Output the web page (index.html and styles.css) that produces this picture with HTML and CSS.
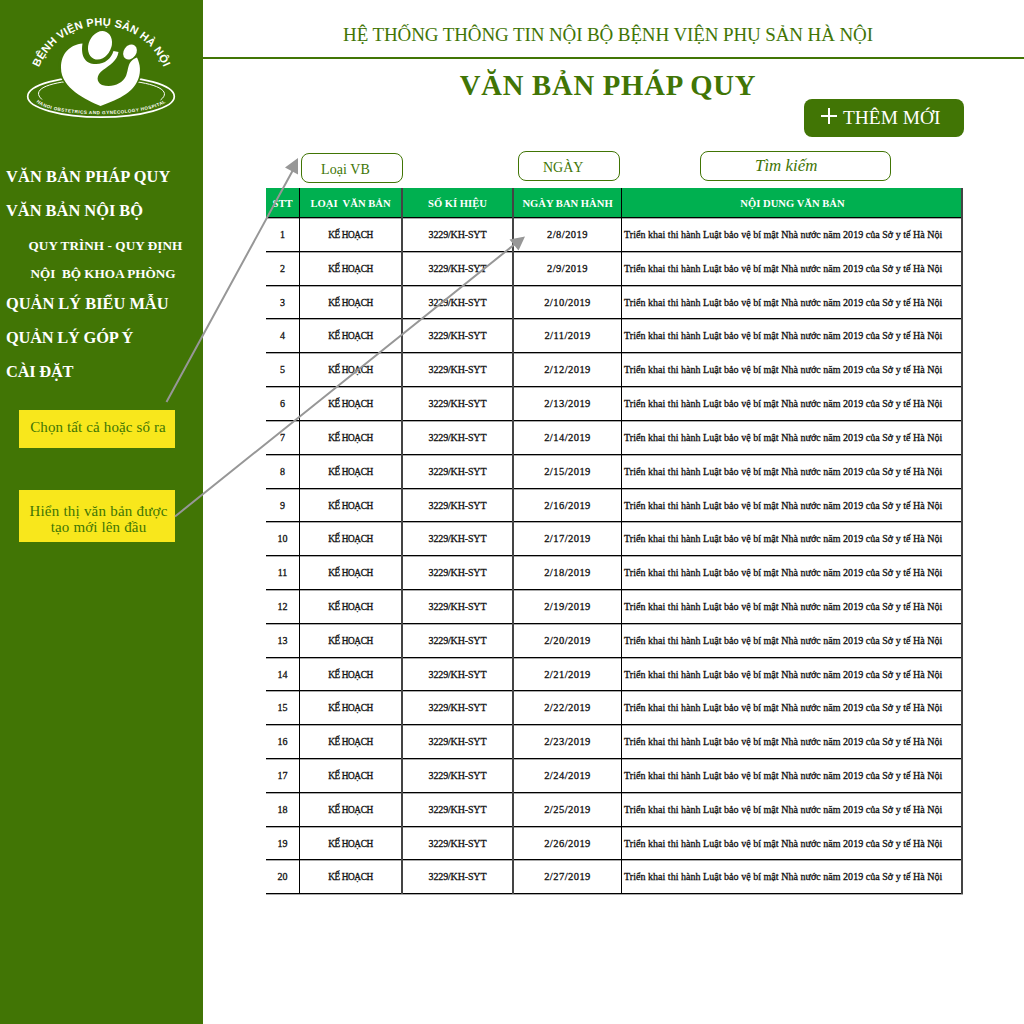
FILE: index.html
```html
<!DOCTYPE html>
<html lang="vi">
<head>
<meta charset="utf-8">
<title>Văn bản pháp quy</title>
<link rel="stylesheet" href="styles.css">
</head>
<body>
<div class="app">
  <aside class="sidebar">
    <svg class="logo" viewBox="0 0 203 130" aria-label="Bệnh viện Phụ sản Hà Nội">
      <defs>
        <path id="arcTop" d="M39 67.500A67.400 67.400 0 0 1 164.500 69.300"/>
        <path id="arcBottom" d="M36.500 102C52 118.500 150 118.500 168 100.500"/>
      </defs>
      <ellipse class="ring-outer" cx="101" cy="96.500" rx="73.300" ry="20.600"/>
      <path class="ring-inner" d="M42 99.500C28 87 58 79.500 101 79.500S176 88 160.500 100"/>
      <path class="heart-gap" d="M100.500 108C86 101 58 88 58.500 66C59 51 68 42 84 41H120C134 48 142 58 142 72C140 90 118 102 100.500 108Z"/>
      <path class="shape" d="M100.500 106C86 100 61 88 61 68C61 53 70 45 82.500 43.500C81 53 83 63 94 64C104 65 111 59 113.500 51L118.500 52C117 61 110 65 103 70C96 75 96 82 102 85C112 88 122 84 126 76C129 69 127 61 137 57.500C144 72 138 86 126 94C119 99 110 102 100.500 106Z"/>
      <ellipse class="shape" cx="100" cy="45.300" rx="11.300" ry="14.800" transform="rotate(25 100 45.300)"/>
      <ellipse class="shape" cx="130" cy="52" rx="6.300" ry="8" transform="rotate(35 130 52)"/>
      <text class="logo-name"><textPath href="#arcTop" textLength="159">BỆNH VIỆN PHỤ SẢN HÀ NỘI</textPath></text>
      <text class="logo-sub"><textPath href="#arcBottom" textLength="133">HANOI OBSTETRICS AND GYNECOLOGY HOSPITAL</textPath></text>
    </svg>
    <nav class="menu">
      <a class="item wide">VĂN BẢN PHÁP QUY</a>
      <a class="item">VĂN BẢN NỘI BỘ</a>
      <a class="subitem">QUY TRÌNH - QUY ĐỊNH</a>
      <a class="subitem second">NỘI&nbsp; BỘ KHOA PHÒNG</a>
      <a class="item">QUẢN LÝ BIỂU MẪU</a>
      <a class="item narrow">QUẢN LÝ GÓP Ý</a>
      <a class="item narrow">CÀI ĐẶT</a>
    </nav>
    <div class="note note-one">Chọn tất cả hoặc sổ ra</div>
    <div class="note note-two"><span>Hiển thị văn bản được</span><br>tạo mới lên đầu</div>
  </aside>
  <main class="main">
    <header class="topbar">HỆ THỐNG THÔNG TIN NỘI BỘ BỆNH VIỆN PHỤ SẢN HÀ NỘI</header>
    <h1 class="title">VĂN BẢN PHÁP QUY</h1>
    <div class="actions">
      <button class="add"><svg class="plus" viewBox="0 0 16 16"><path d="M8 0V16M0 8H16"/></svg>THÊM MỚI</button>
    </div>
    <div class="filters">
      <div class="field type">Loại VB</div>
      <div class="field date">NGÀY</div>
      <div class="field search">Tìm kiếm</div>
    </div>
    <section class="table">
      <div class="row head"><span>STT</span><span>LOẠI&nbsp; VĂN BẢN</span><span>SỐ KÍ HIỆU</span><span>NGÀY BAN HÀNH</span><span>NỘI DUNG VĂN BẢN</span></div>
      <div class="row"><span>1</span><span>KẾ HOẠCH</span><span>3229/KH-SYT</span><span>2/8/2019</span><span>Triển khai thi hành Luật bảo vệ bí mật Nhà nước năm 2019 của Sở y tế Hà Nội</span></div>
      <div class="row"><span>2</span><span>KẾ HOẠCH</span><span>3229/KH-SYT</span><span>2/9/2019</span><span>Triển khai thi hành Luật bảo vệ bí mật Nhà nước năm 2019 của Sở y tế Hà Nội</span></div>
      <div class="row"><span>3</span><span>KẾ HOẠCH</span><span>3229/KH-SYT</span><span>2/10/2019</span><span>Triển khai thi hành Luật bảo vệ bí mật Nhà nước năm 2019 của Sở y tế Hà Nội</span></div>
      <div class="row"><span>4</span><span>KẾ HOẠCH</span><span>3229/KH-SYT</span><span>2/11/2019</span><span>Triển khai thi hành Luật bảo vệ bí mật Nhà nước năm 2019 của Sở y tế Hà Nội</span></div>
      <div class="row"><span>5</span><span>KẾ HOẠCH</span><span>3229/KH-SYT</span><span>2/12/2019</span><span>Triển khai thi hành Luật bảo vệ bí mật Nhà nước năm 2019 của Sở y tế Hà Nội</span></div>
      <div class="row"><span>6</span><span>KẾ HOẠCH</span><span>3229/KH-SYT</span><span>2/13/2019</span><span>Triển khai thi hành Luật bảo vệ bí mật Nhà nước năm 2019 của Sở y tế Hà Nội</span></div>
      <div class="row"><span>7</span><span>KẾ HOẠCH</span><span>3229/KH-SYT</span><span>2/14/2019</span><span>Triển khai thi hành Luật bảo vệ bí mật Nhà nước năm 2019 của Sở y tế Hà Nội</span></div>
      <div class="row"><span>8</span><span>KẾ HOẠCH</span><span>3229/KH-SYT</span><span>2/15/2019</span><span>Triển khai thi hành Luật bảo vệ bí mật Nhà nước năm 2019 của Sở y tế Hà Nội</span></div>
      <div class="row"><span>9</span><span>KẾ HOẠCH</span><span>3229/KH-SYT</span><span>2/16/2019</span><span>Triển khai thi hành Luật bảo vệ bí mật Nhà nước năm 2019 của Sở y tế Hà Nội</span></div>
      <div class="row"><span>10</span><span>KẾ HOẠCH</span><span>3229/KH-SYT</span><span>2/17/2019</span><span>Triển khai thi hành Luật bảo vệ bí mật Nhà nước năm 2019 của Sở y tế Hà Nội</span></div>
      <div class="row"><span>11</span><span>KẾ HOẠCH</span><span>3229/KH-SYT</span><span>2/18/2019</span><span>Triển khai thi hành Luật bảo vệ bí mật Nhà nước năm 2019 của Sở y tế Hà Nội</span></div>
      <div class="row"><span>12</span><span>KẾ HOẠCH</span><span>3229/KH-SYT</span><span>2/19/2019</span><span>Triển khai thi hành Luật bảo vệ bí mật Nhà nước năm 2019 của Sở y tế Hà Nội</span></div>
      <div class="row"><span>13</span><span>KẾ HOẠCH</span><span>3229/KH-SYT</span><span>2/20/2019</span><span>Triển khai thi hành Luật bảo vệ bí mật Nhà nước năm 2019 của Sở y tế Hà Nội</span></div>
      <div class="row"><span>14</span><span>KẾ HOẠCH</span><span>3229/KH-SYT</span><span>2/21/2019</span><span>Triển khai thi hành Luật bảo vệ bí mật Nhà nước năm 2019 của Sở y tế Hà Nội</span></div>
      <div class="row"><span>15</span><span>KẾ HOẠCH</span><span>3229/KH-SYT</span><span>2/22/2019</span><span>Triển khai thi hành Luật bảo vệ bí mật Nhà nước năm 2019 của Sở y tế Hà Nội</span></div>
      <div class="row"><span>16</span><span>KẾ HOẠCH</span><span>3229/KH-SYT</span><span>2/23/2019</span><span>Triển khai thi hành Luật bảo vệ bí mật Nhà nước năm 2019 của Sở y tế Hà Nội</span></div>
      <div class="row"><span>17</span><span>KẾ HOẠCH</span><span>3229/KH-SYT</span><span>2/24/2019</span><span>Triển khai thi hành Luật bảo vệ bí mật Nhà nước năm 2019 của Sở y tế Hà Nội</span></div>
      <div class="row"><span>18</span><span>KẾ HOẠCH</span><span>3229/KH-SYT</span><span>2/25/2019</span><span>Triển khai thi hành Luật bảo vệ bí mật Nhà nước năm 2019 của Sở y tế Hà Nội</span></div>
      <div class="row"><span>19</span><span>KẾ HOẠCH</span><span>3229/KH-SYT</span><span>2/26/2019</span><span>Triển khai thi hành Luật bảo vệ bí mật Nhà nước năm 2019 của Sở y tế Hà Nội</span></div>
      <div class="row"><span>20</span><span>KẾ HOẠCH</span><span>3229/KH-SYT</span><span>2/27/2019</span><span>Triển khai thi hành Luật bảo vệ bí mật Nhà nước năm 2019 của Sở y tế Hà Nội</span></div>
    </section>
  </main>
  <svg class="arrows" viewBox="0 0 1024 1024">
    <path class="arrow-line" d="M166.500 402L293 170M175 516.500L515 244"/>
    <path class="arrow-head" d="M298 158L285 167.500L298 174.500ZM525 236.500L509.500 239.500L518.500 250.500Z"/>
  </svg>
</div>
</body>
</html>
```
FILE: styles.css
```css
* { box-sizing: border-box; }
body {
  margin: 0;
  background: #fff;
  color: #417505;
  font-family: "Liberation Serif", serif;
}
.app {
  position: relative;
  display: flex;
  width: 1024px;
  height: 1024px;
  overflow: hidden;
}
.sidebar {
  width: 203px;
  flex: none;
  background: #417505;
  color: #fff;
}
.logo { display: block; width: 203px; height: 130px; }
.ring-outer, .ring-inner { fill: none; stroke: #fff; }
.ring-outer { stroke-width: 1.7; }
.ring-inner { stroke-width: 1; }
.shape { fill: #fff; }
.heart-gap { fill: #417505; }
.logo-name, .logo-sub {
  fill: #fff;
  font-family: "Liberation Sans", sans-serif;
  font-weight: bold;
}
.logo-name { font-size: 11px; }
.logo-sub { font-size: 4.6px; }
.menu {
  display: flex;
  flex-direction: column;
  padding: 30px 0 0 6px;
  white-space: nowrap;
}
.item {
  height: 34px;
  font-size: 16.400px;
  font-weight: bold;
  line-height: 34px;
}
.wide { letter-spacing: 0.120px; }
.narrow { letter-spacing: -0.200px; }
.subitem {
  height: 28px;
  padding-left: 22.500px;
  font-size: 13.200px;
  font-weight: bold;
  letter-spacing: 0.060px;
  line-height: 36px;
}
.second { height: 31px; padding-left: 24.500px; letter-spacing: 0; }
.note {
  width: 156px;
  margin-left: 19px;
  background: #f8e71c;
  color: #417505;
  font-size: 15px;
  line-height: 16px;
  text-align: center;
  white-space: nowrap;
}
.note-one { height: 38px; margin-top: 21px; padding: 9px 0 0 2px; letter-spacing: 0.130px; }
.note-two { height: 52px; margin-top: 42px; padding: 13px 0 0 3px; letter-spacing: 0.150px; }
.note-two span { letter-spacing: 0.220px; }
.main { flex: 1; display: flex; flex-direction: column; }
.topbar {
  height: 59px;
  padding: 13px 11px 0 0;
  border-bottom: 2px solid #417505;
  font-size: 19px;
  letter-spacing: -0.110px;
  line-height: 44px;
  text-align: center;
}
.title {
  height: 40px;
  margin: 0;
  padding-right: 11px;
  font-size: 28.700px;
  letter-spacing: 0.760px;
  line-height: 53px;
  text-align: center;
}
.actions { display: flex; justify-content: flex-end; padding-right: 60px; }
.add {
  display: flex;
  align-items: center;
  width: 160px;
  height: 38px;
  padding: 0 0 0 17px;
  gap: 6px;
  border: 0;
  border-radius: 8px;
  background: #417505;
  color: #fff;
  font-family: inherit;
  font-size: 19.400px;
}
.plus { width: 16px; height: 16px; margin-bottom: 4px; }
.plus path { stroke: #fff; stroke-width: 2; }
.filters {
  display: flex;
  height: 51px;
  padding: 14px 0 0 98px;
}
.field {
  height: 30px;
  border: 1px solid #417505;
  border-radius: 8px;
  line-height: 31px;
  font-size: 14px;
}
.type { width: 102px; margin: 2px 115px 0 0; padding-left: 19px; letter-spacing: 0.080px; }
.date { width: 102px; margin-right: 80px; padding-left: 24px; }
.search { width: 191px; padding-left: 54px; font-size: 16.900px; font-style: italic; line-height: 27px; }
.table {
  width: 697px;
  margin-left: 63px;
  color: #111;
}
.row {
  display: grid;
  grid-template-columns: 34px 103px 111px 108px 341px;
  height: 33.820px;
  border-bottom: 1px solid #000;
  box-shadow: 0 1px 0 #aaa;
  font-size: 10px;
  line-height: 33px;
  text-align: center;
  white-space: nowrap;
  -webkit-text-stroke: 0.300px #111;
}
.row span { border-right: 1px solid #000; }
.row span:nth-child(2), .row span:nth-child(3), .row span:last-child { border-right: 2px solid #444; }
.row span:nth-child(2) { font-size: 9.300px; letter-spacing: -0.400px; line-height: 34px; }
.row span:nth-child(3) { letter-spacing: -0.150px; }
.row span:nth-child(4) { font-size: 10.500px; letter-spacing: 0.450px; }
.row span:last-child { padding-left: 2px; letter-spacing: 0.030px; text-align: left; }
.row.head {
  height: 30px;
  background: #00b050;
  color: #fff;
  font-weight: bold;
  -webkit-text-stroke: 0;
}
.row.head span:nth-child(n) { font-size: 10.600px; letter-spacing: 0; line-height: 31px; text-align: center; }
.arrows {
  position: absolute;
  inset: 0;
  width: 1024px;
  height: 1024px;
  pointer-events: none;
}
.arrow-line { fill: none; stroke: #979797; stroke-width: 2; }
.arrow-head { fill: #979797; }
```
